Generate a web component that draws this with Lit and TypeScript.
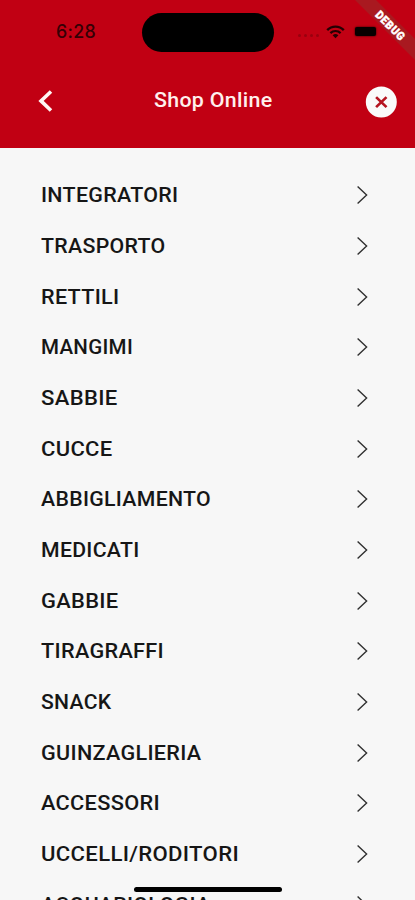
import { LitElement, html, css } from "lit";
import { customElement, property } from "lit/decorators.js";

interface Category {
  name: string;
  width: number;
}

const CATEGORIES: Category[] = [
  { name: "INTEGRATORI", width: 137.5 },
  { name: "TRASPORTO", width: 124.5 },
  { name: "RETTILI", width: 78.5 },
  { name: "MANGIMI", width: 92 },
  { name: "SABBIE", width: 76.5 },
  { name: "CUCCE", width: 71.5 },
  { name: "ABBIGLIAMENTO", width: 170 },
  { name: "MEDICATI", width: 98.5 },
  { name: "GABBIE", width: 77.5 },
  { name: "TIRAGRAFFI", width: 123 },
  { name: "SNACK", width: 70.5 },
  { name: "GUINZAGLIERIA", width: 160.5 },
  { name: "ACCESSORI", width: 119 },
  { name: "UCCELLI/RODITORI", width: 198 },
  { name: "ACQUARIOLOGIA", width: 169.5 },
];

@customElement("fitted-label")
class FittedLabel extends LitElement {
  @property() text = "";
  @property({ type: Number }) width = 0;

  static styles = css`
    :host { display: block; white-space: nowrap; }
    .label { display: inline-block; letter-spacing: 0.3px; transform-origin: left center; }
  `;

  firstUpdated() {
    const label = this.renderRoot.querySelector<HTMLElement>(".label")!;
    const natural = label.getBoundingClientRect().width;
    label.style.transform = `scaleX(${(this.width / natural).toFixed(4)})`;
    label.style.marginRight = `${(this.width - natural).toFixed(2)}px`;
  }

  render() {
    return html`<span class="label">${this.text}</span>`;
  }
}

@customElement("app-root")
class AppRoot extends LitElement {
  static styles = css`
    :host {
      display: block;
      position: relative;
      height: 900px;
      overflow: hidden;
      background: #f7f7f7;
      color: #161616;
      font-family: Roboto, "Noto Sans", sans-serif;
    }
    .header { height: 148px; background: #c10013; }
    .status {
      height: 64px;
      display: grid;
      grid-template-columns: 142px 132px 1fr;
      align-items: center;
      box-sizing: border-box;
    }
    .time {
      padding-left: 56px;
      font: 500 18px/20px Inter, sans-serif;
      color: #350005;
    }
    .island { height: 39px; border-radius: 20px; background: #000; }
    .signals { display: flex; align-items: center; margin-top: -1px; }
    .dots { margin: 8px 0 0 24px; display: flex; gap: 3px; }
    .dot { width: 3px; height: 3px; border-radius: 50%; background: #99000f; }
    .wifi { margin-left: 7px; display: block; }
    .battery {
      margin-left: 10px;
      width: 21px;
      height: 9px;
      border-radius: 2px;
      background: #080000;
      box-shadow: 0 0 1.5px 0.5px #650009;
    }
    .nav {
      height: 74px;
      display: grid;
      grid-template-columns: 90px 1fr 90px;
      align-items: center;
    }
    .back { display: block; margin-left: 36px; }
    .title {
      display: flex;
      justify-content: center;
      padding: 0 0 2px 11px;
      color: #fff0ed;
      font-size: 21px;
      line-height: 26px;
      font-weight: 500;
    }
    .close { display: block; margin: 2px 0 0 40px; }
    .debug {
      position: absolute;
      top: 0;
      right: 0;
      display: block;
      font: 900 11.5px Roboto, sans-serif;
      letter-spacing: 0.6px;
    }
    .list { padding-top: 21.9px; }
    .row {
      height: 50.69px;
      display: flex;
      align-items: center;
      justify-content: space-between;
      padding: 0 46px 0 40.7px;
      font-size: 21px;
      line-height: 26px;
      font-weight: 500;
    }
    .row svg { display: block; }
    .home {
      position: absolute;
      left: 134px;
      bottom: 8px;
      width: 148px;
      height: 5px;
      border-radius: 3px;
      background: #000;
    }
  `;

  render() {
    return html`
      <div class="header">
        <div class="status">
          <div class="time"><fitted-label text="6:28" width="40"></fitted-label></div>
          <div class="island"></div>
          <div class="signals">
            <div class="dots">${[0, 1, 2, 3].map(() => html`<i class="dot"></i>`)}</div>
            <svg class="wifi" width="19" height="14" viewBox="0 0 19 14" fill="none" stroke="#250003">
              <path d="M1.2 5.2C5.8.4 13.2.4 17.8 5.2" stroke-width="2.4"/>
              <path d="M4.4 8.1C7.2 5.3 11.8 5.3 14.6 8.1" stroke-width="2.2"/>
              <path d="M6.6 10.2Q9.5 8 12.4 10.2L9.5 13.3Z" fill="#250003" stroke="none"/>
            </svg>
            <div class="battery"></div>
          </div>
        </div>
        <div class="nav">
          <svg class="back" width="18" height="24" viewBox="0 0 18 24" fill="none" stroke="#fff6f4" stroke-width="3.6">
            <path d="M15 2.5L5 11.9L15 21.5"/>
          </svg>
          <div class="title"><fitted-label text="Shop Online" width="118.5"></fitted-label></div>
          <svg class="close" width="32" height="32" viewBox="0 0 32 32">
            <circle cx="16.3" cy="16" r="15.5" fill="#fafafa"/>
            <path d="M11.1 11.1L21.5 21.1M21.5 11.1L11.1 21.1" stroke="#b51420" stroke-width="2.7"/>
          </svg>
        </div>
      </div>
      <div class="list">
        ${CATEGORIES.map(
          (c) => html`<div class="row">
            <fitted-label text=${c.name} width=${c.width}></fitted-label>
            <svg width="13" height="20" viewBox="0 0 13 20" fill="none" stroke="#303030" stroke-width="1.4">
              <path d="M1.6 1.6L10.6 10L1.6 18.4"/>
            </svg>
          </div>`
        )}
      </div>
      <svg class="debug" width="65" height="65" viewBox="0 0 65 65">
        <path d="M5 0H26L65 39V60Z" fill="#a91920"/>
        <text x="40.5" y="29.8" text-anchor="middle" transform="rotate(45 40.5 25.6)" fill="#fff" stroke="#fff" stroke-width=".4" textLength="37" lengthAdjust="spacingAndGlyphs">DEBUG</text>
      </svg>
      <div class="home"></div>
    `;
  }
}
